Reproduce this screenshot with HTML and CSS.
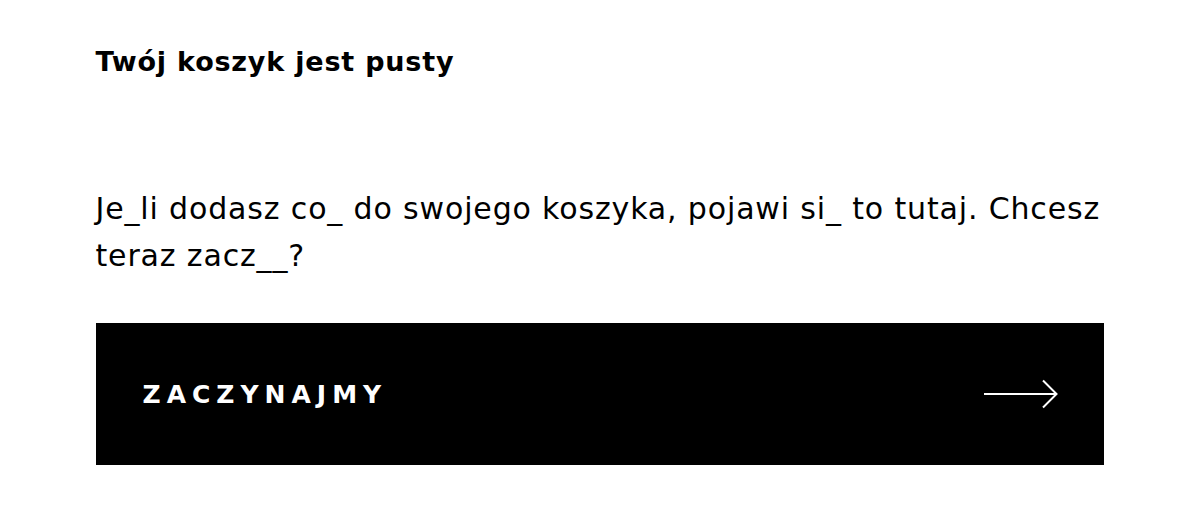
FILE: index.html
```html
<!DOCTYPE html>
<html lang="pl">
  <head>
    <meta charset="utf-8" />
    <title>Koszyk</title>
    <meta name="viewport" content="width=device-width, initial-scale=1.0" />
    <link rel="stylesheet" href="styles.css">
  </head>
  <body>
    <section class="cart-empty">
      <h2 class="cart-title">Twój koszyk jest pusty</h2>
      <p class="cart-text">
        Je_li dodasz co_ do swojego koszyka, pojawi si_ to tutaj. Chcesz teraz zacz__?
      </p>
      <a class="cart-button" href="#">
        <span>Zaczynajmy</span>
        <svg class="arrow" width="74" height="30" viewBox="0 0 74 30">
          <line x1="0" y1="15" x2="72" y2="15" />
          <polyline points="59,1.5 72.5,15 59,28.5" />
        </svg>
      </a>
    </section>
  </body>
</html>
```

FILE: styles.css
```css
body {
  margin: 0;
  background: #fff;
  color: #000;
  font-family: "DejaVu Sans", sans-serif;
}

.cart-empty {
  width: 1008px;
  margin: 0 auto;
  padding-top: 46px;
}

.cart-title {
  margin: 0;
  font-size: 27px;
  line-height: 32px;
  font-weight: bold;
  letter-spacing: 0.8px;
}

.cart-text {
  margin: 107px 0 0;
  font-size: 30px;
  line-height: 47px;
  letter-spacing: 0.85px;
}

.cart-button {
  display: flex;
  align-items: center;
  justify-content: space-between;
  height: 142px;
  margin-top: 44px;
  padding: 0 46px 0 47px;
  background: #000;
  color: #fff;
  text-decoration: none;
  text-transform: uppercase;
  font-size: 25px;
  font-weight: bold;
  letter-spacing: 6px;
}

.arrow {
  display: block;
  fill: none;
  stroke: #fff;
  stroke-width: 2;
}
```
